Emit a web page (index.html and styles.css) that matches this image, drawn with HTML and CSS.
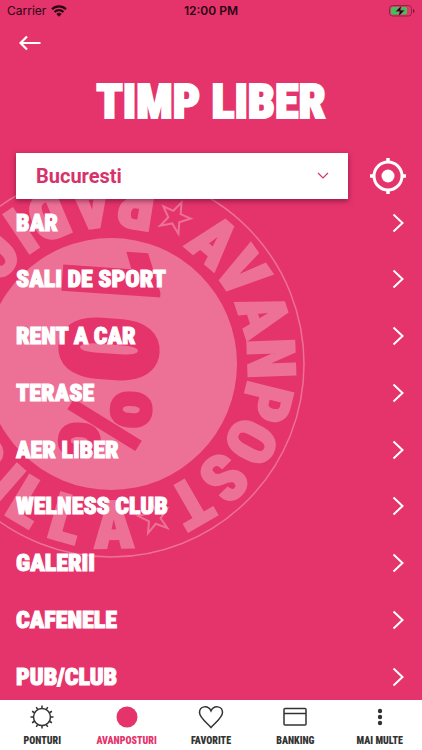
FILE: index.html
```html
<!DOCTYPE html>
<html lang="ro">
<head>
<meta charset="utf-8">
<meta name="viewport" content="width=device-width, initial-scale=1">
<title>Timp liber</title>
<link rel="stylesheet" href="styles.css">
</head>
<body>
<div class="app">
  <header class="status">
    <span class="carrier">Carrier
      <svg width="16" height="12" viewBox="0 0 16 12" aria-hidden="true"><path d="M1 4.2a10 10 0 0 1 14 0M3.5 7a6.4 6.4 0 0 1 9 0" fill="none" stroke="#2a0613" stroke-width="2.2"/><path d="M5.4 9.1a3.7 3.7 0 0 1 5.2 0L8 11.8z" fill="#2a0613"/></svg>
    </span>
    <time class="clock">12:00 PM</time>
    <svg class="battery" width="26" height="12" viewBox="0 0 26 12" aria-hidden="true"><rect x=".5" y=".5" width="22" height="10.5" rx="3" fill="none" stroke="#96204a"/><rect x="2" y="2" width="16" height="7.5" rx="1.5" fill="#35c75a"/><path d="M24 4v4q1.400-.6 1.400-2T24 4z" fill="#6f1736"/><path d="M12.500.500 6.500 6.500h4L9.500 11.500 15.500 5.200h-4z" fill="#1c0810" stroke="#e5336c" stroke-width=".5"/></svg>
  </header>
  <button class="back" aria-label="Inapoi"><svg width="22" height="16" viewBox="0 0 22 16"><path d="M21.500 8H2M8 1.500 1.500 8 8 14.500" fill="none" stroke="#fff" stroke-width="2.200"/></svg></button>
  <h1>TIMP LIBER</h1>
  <div class="search">
    <div class="city">
      <select aria-label="Oras"><option>Bucuresti</option></select>
      <svg width="12" height="8" viewBox="0 0 12 8" aria-hidden="true"><path d="M1 1l5 5 5-5" fill="none" stroke="#d6336c" stroke-width="1.200"/></svg>
    </div>
    <button class="locate" aria-label="Locatia mea"><svg width="36" height="36" viewBox="0 0 36 36"><circle cx="18" cy="18" r="14" fill="none" stroke="#fff" stroke-width="3"/><circle cx="18" cy="18" r="6.500" fill="#fff"/><path d="M18 0v5M18 31v5M0 18h5M31 18h5" stroke="#fff" stroke-width="3.500"/></svg></button>
  </div>
  <main>
    <svg class="stamp" width="305" height="388" viewBox="0 170 305 388" aria-hidden="true">
      <circle cx="111" cy="364" r="193" class="rim"/>
      <circle cx="111" cy="364" r="126" class="disc"/>
      <g class="ring">
        <text transform="translate(111 364) rotate(40)" y="-137">A</text>
        <text transform="translate(111 364) rotate(55)" y="-137">V</text>
        <text transform="translate(111 364) rotate(72)" y="-137">A</text>
        <text transform="translate(111 364) rotate(88)" y="-137">N</text>
        <text transform="translate(111 364) rotate(104)" y="-137">P</text>
        <text transform="translate(111 364) rotate(119)" y="-137">O</text>
        <text transform="translate(111 364) rotate(135)" y="-137">S</text>
        <text transform="translate(111 364) rotate(150)" y="-137">T</text>
        <text transform="translate(111 364) rotate(189)" y="184">R</text>
        <text transform="translate(111 364) rotate(173)" y="184">A</text>
        <text transform="translate(111 364) rotate(157)" y="184">D</text>
        <text transform="translate(111 364) rotate(146)" y="184">I</text>
        <text transform="translate(111 364) rotate(133)" y="184">O</text>
        <text transform="translate(111 364) rotate(55)" y="184">R</text>
        <text transform="translate(111 364) rotate(41)" y="184">I</text>
        <text transform="translate(111 364) rotate(31)" y="184">L</text>
        <text transform="translate(111 364) rotate(16)" y="184">L</text>
        <text transform="translate(111 364) rotate(-1)" y="184">A</text>
      </g>
      <path class="star" transform="translate(175 217) rotate(24)" d="M0-16 4-5 15-5 6 3 10 14 0 7-10 14-6 3-15-5-4-5z"/>
      <path class="star" transform="translate(154 517) rotate(-15)" d="M0-16 4-5 15-5 6 3 10 14 0 7-10 14-6 3-15-5-4-5z"/>
      <g class="offer">
        <text transform="translate(112 277) rotate(94)" y="47">1</text>
        <text transform="translate(109 349) rotate(94)" y="47">0</text>
        <text class="percent" transform="translate(105 425) rotate(94)" y="44">%</text>
      </g>
    </svg>
    <ul class="list">
      <li><a href="#">BAR<svg width="12" height="20" viewBox="0 0 12 20"><path d="M1.500 1.500 10.500 10l-9 8.500"/></svg></a></li>
      <li><a href="#">SALI DE SPORT<svg width="12" height="20" viewBox="0 0 12 20"><path d="M1.500 1.500 10.500 10l-9 8.500"/></svg></a></li>
      <li><a href="#">RENT A CAR<svg width="12" height="20" viewBox="0 0 12 20"><path d="M1.500 1.500 10.500 10l-9 8.500"/></svg></a></li>
      <li><a href="#">TERASE<svg width="12" height="20" viewBox="0 0 12 20"><path d="M1.500 1.500 10.500 10l-9 8.500"/></svg></a></li>
      <li><a href="#">AER LIBER<svg width="12" height="20" viewBox="0 0 12 20"><path d="M1.500 1.500 10.500 10l-9 8.500"/></svg></a></li>
      <li><a href="#">WELNESS CLUB<svg width="12" height="20" viewBox="0 0 12 20"><path d="M1.500 1.500 10.500 10l-9 8.500"/></svg></a></li>
      <li><a href="#">GALERII<svg width="12" height="20" viewBox="0 0 12 20"><path d="M1.500 1.500 10.500 10l-9 8.500"/></svg></a></li>
      <li><a href="#">CAFENELE<svg width="12" height="20" viewBox="0 0 12 20"><path d="M1.500 1.500 10.500 10l-9 8.500"/></svg></a></li>
      <li><a href="#">PUB/CLUB<svg width="12" height="20" viewBox="0 0 12 20"><path d="M1.500 1.500 10.500 10l-9 8.500"/></svg></a></li>
    </ul>
  </main>
  <nav class="tabs">
    <a href="#"><svg width="24" height="24" viewBox="0 0 24 24"><circle cx="12" cy="12" r="8.500"/><path d="M12 3.500V.500M12 20.500v3M3.500 12h-3M20.500 12h3M16.250 4.640l1.500-2.600M7.750 4.640l-1.500-2.600M16.250 19.360l1.500 2.600M7.750 19.360l-1.500 2.600M19.360 7.750l2.600-1.500M19.360 16.250l2.600 1.500M4.640 7.750l-2.600-1.500M4.640 16.250l-2.600 1.500"/></svg>PONTURI</a>
    <a href="#" class="active"><svg width="24" height="24" viewBox="0 0 24 24"><circle cx="12" cy="12" r="10.500"/></svg>AVANPOSTURI</a>
    <a href="#"><svg width="26" height="24" viewBox="0 0 26 24"><path d="M13 22.500C9 18 1.500 12.500 1.500 7.500 1.500 1 10-.5 13 6c3-6.500 11.500-5 11.500 1.500 0 5-7.500 10.500-11.500 15z"/></svg>FAVORITE</a>
    <a href="#"><svg width="24" height="24" viewBox="0 0 24 24"><rect x="1" y="3.500" width="22" height="16.500" rx="1"/><path d="M1 8.500h22"/></svg>BANKING</a>
    <a href="#"><svg class="dots" width="24" height="24" viewBox="0 0 24 24"><circle cx="12" cy="6" r="2.200"/><circle cx="12" cy="12" r="2.200"/><circle cx="12" cy="18" r="2.200"/></svg>MAI MULTE</a>
  </nav>
</div>
</body>
</html>
```
FILE: styles.css
```css
* { box-sizing: border-box; }

body {
  margin: 0;
  background: #e5336c;
  color: #fff;
  font-family: "Roboto Condensed", "Open Sans Condensed", Roboto, sans-serif;
  font-weight: 900;
}

button {
  padding: 0;
  border: 0;
  background: none;
}

a { color: inherit; text-decoration: none; }
svg { display: block; flex: none; }

.app {
  display: flex;
  flex-direction: column;
  height: 100vh;
}

.status {
  display: grid;
  grid-template-columns: 1fr auto 1fr;
  align-items: center;
  height: 22px;
  padding: 0 7px;
  color: #2a0613;
  font: 400 12px/20px Inter, sans-serif;
}

.carrier { display: flex; align-items: center; gap: 5px; }
.clock { font-weight: 600; }
.battery { justify-self: end; }

.back {
  align-self: flex-start;
  margin: 13px 19px 0;
}

h1 {
  margin: 21px 0 0;
  font-size: 48px;
  font-weight: 900;
  line-height: 60px;
  text-align: center;
  -webkit-text-stroke: 2px #fff;
}

.search {
  position: relative;
  z-index: 1;
  display: flex;
  align-items: center;
  gap: 22px;
  margin-top: 21px;
  padding: 0 16px;
}

.city {
  display: grid;
  grid-template-columns: 1fr auto;
  align-items: center;
  flex: 1;
  background: #fff;
  box-shadow: 0 2px 5px rgba(60, 0, 25, 0.5);
}

.city select {
  grid-area: 1 / 1 / 2 / 3;
  height: 46px;
  padding: 0 20px;
  border: 0;
  appearance: none;
  background: none;
  color: #d6336c;
  font: 700 20px Roboto, sans-serif;
}

.city svg { grid-area: 1 / 2; margin-right: 19px; pointer-events: none; }

main {
  position: relative;
  flex: 1;
  min-height: 0;
}

.stamp {
  position: absolute;
  left: 0;
  top: -29px;
  overflow: visible;
}

.rim { fill: none; stroke: #ed7197; stroke-width: 1.5; }
.disc { fill: #ed7197; }
.ring { fill: #ed7197; stroke: #ed7197; stroke-width: 2; font-size: 66px; text-anchor: middle; }
.star { fill: none; stroke: #ed7197; stroke-width: 2; }
.offer { fill: #e5336c; stroke: #e5336c; stroke-width: 5; font-size: 132px; text-anchor: middle; }
.percent { font-size: 124px; stroke-width: 2; }

.list {
  display: flex;
  flex-direction: column;
  justify-content: space-between;
  position: relative;
  height: 100%;
  margin: 0;
  padding: 0;
  list-style: none;
}

.list a {
  display: flex;
  align-items: center;
  justify-content: space-between;
  height: 47px;
  padding: 0 18px 0 16px;
  font-size: 24px;
  line-height: 32px;
  -webkit-text-stroke: 1px #fff;
}

.list path { fill: none; stroke: #fff; stroke-width: 2; }

.tabs {
  display: grid;
  grid-template-columns: repeat(5, 1fr);
  height: 50px;
  background: #fff;
  color: #333;
  font-size: 10px;
  line-height: 14px;
}

.tabs a {
  display: flex;
  flex-direction: column;
  align-items: center;
  gap: 5px;
  padding-top: 5px;
  white-space: nowrap;
}

.tabs svg { fill: none; stroke: #333; stroke-width: 1.5; }
.tabs .dots { fill: #333; stroke: none; }
.tabs .active { color: #e5336c; }
.tabs .active svg { fill: #e5336c; stroke: none; }
```
